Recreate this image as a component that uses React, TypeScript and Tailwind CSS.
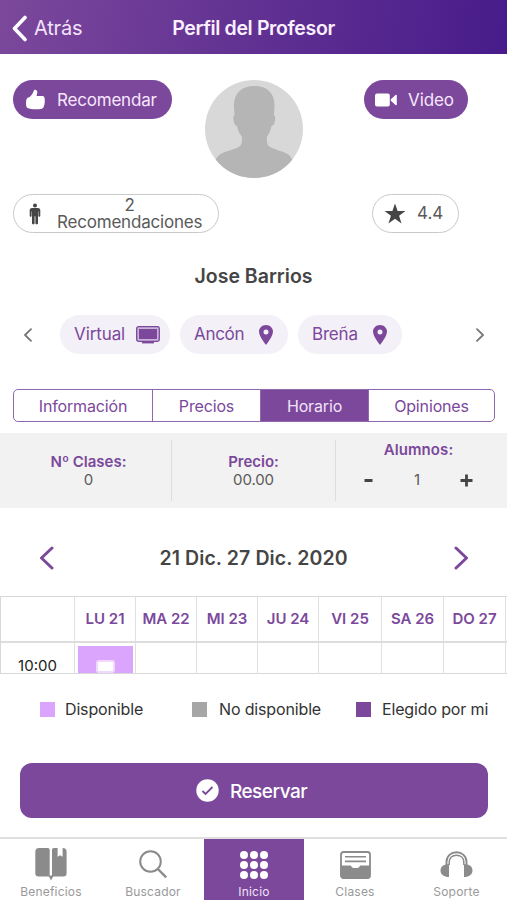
import React, { useState } from 'react'
import clsx from 'clsx'

const days = ['LU 21', 'MA 22', 'MI 23', 'JU 24', 'VI 25', 'SA 26', 'DO 27']

const tabs = ['Información', 'Precios', 'Horario', 'Opiniones']

const legend = [
    { label: 'Disponible', color: 'bg-[#dba4fd]', box: 'w-[152px] gap-[10px]' },
    { label: 'No disponible', color: 'bg-[#a6a6a6]', box: 'w-[164px] gap-[12px]' },
    { label: 'Elegido por mi', color: 'bg-[#7b489b]', box: 'gap-[11px]' },
]

type IconProps = { className?: string }

function Chevron({ className, width, d, box }: IconProps & { width: number; d: string; box: string }) {
    return (
        <svg className={className} viewBox={box} fill="none" stroke="currentColor" strokeWidth={width} strokeLinecap="round" strokeLinejoin="round">
            <path d={d} />
        </svg>
    )
}

function ThumbIcon() {
    return (
        <svg className="h-[21px] w-[19px] shrink-0" viewBox="0 0 19 21" fill="white">
            <path d="M8.300 1C9.600.2 11.300 1.200 11.300 3c0 1.500-.6 2.800-.7 4h5.800c1.500 0 2.300 1 2 2.200.5.700.6 1.700.2 2.500.4.800.4 1.900-.1 2.600.2 1 0 1.900-.6 2.500-.1 2.200-1.400 3-3.100 3.200-3.200.5-7 .5-9.800-.1-1.200-.3-2.100-.5-3-.6C.7 19.100 0 17 0 14.300 0 11.600.5 9.300 1.700 8.800c2.900-.9 4.300-3.200 5.600-5.800.3-.8.500-1.600 1-2z" />
        </svg>
    )
}

function VideoIcon() {
    return (
        <svg className="h-[14px] w-[23px] shrink-0" viewBox="0 0 23 14" fill="white">
            <rect x="0" y="0.500" width="14.800" height="13" rx="2" />
            <path d="M15.800 6.200 20.500 2c.6-.5 1.300-.3 1.300.5v9c0 .8-.7 1-1.300.5l-4.700-4.200z" />
        </svg>
    )
}

function ManIcon() {
    return (
        <svg className="h-[22px] w-[12px] shrink-0" viewBox="0 0 12 22" fill="#454545">
            <circle cx="6" cy="2.500" r="2" />
            <path d="M3 5h6c1.500 0 2.300 1 2.300 2.400v5.300c0 1.300-1.900 1.300-1.900 0V8.500H9v11.800c0 1.500-2.600 1.500-2.600 0v-7h-.8v7c0 1.500-2.600 1.500-2.600 0V8.500h-.4v4.200c0 1.300-1.900 1.300-1.900 0V7.400C.7 6 1.500 5 3 5z" />
        </svg>
    )
}

function StarIcon() {
    return (
        <svg className="h-[21px] w-[22px] shrink-0" viewBox="0 0 22 21" fill="#454545">
            <path d="m11 .5 2.600 7.600h7.800l-6.300 4.700 2.400 7.700-6.500-4.700-6.500 4.700 2.400-7.700L.6 8.100h7.800z" />
        </svg>
    )
}

function ScreenIcon() {
    return (
        <svg className="h-[18px] w-[24px] shrink-0" viewBox="0 0 24 18">
            <rect x="0.700" y="0.700" width="22.600" height="14.600" rx="1.800" fill="#c9b3d8" stroke="#7b489b" strokeWidth="1.300" />
            <rect x="3" y="3" width="18" height="10" fill="#7b489b" />
            <path d="M6 16.700h12" stroke="#7b489b" strokeWidth="1.400" />
        </svg>
    )
}

function PinIcon() {
    return (
        <svg className="h-[20px] w-[14px] shrink-0" viewBox="0 0 14 20" fill="#7b489b" fillRule="evenodd">
            <path d="M7 0c3.900 0 7 2.900 7 6.600C14 11.500 7 20 7 20S0 11.500 0 6.600C0 2.900 3.100 0 7 0zm0 4.600a2.500 2.500 0 1 0 0 5 2.500 2.500 0 0 0 0-5z" />
        </svg>
    )
}

function Avatar() {
    return (
        <svg className="ml-[33px] h-[98px] w-[98px] shrink-0" viewBox="0 0 98 98">
            <defs>
                <clipPath id="avatar">
                    <circle cx="49" cy="49" r="49" />
                </clipPath>
            </defs>
            <g clipPath="url(#avatar)">
                <rect width="98" height="98" fill="#d8d8d8" />
                <path
                    d="M49.500 6C62 6 69.500 13 69.500 25c0 4-.3 7-.7 10 1.600.5 1.600 3 1.100 5.500-.5 3-1.400 5.500-3.400 5.500-1 5-2.500 8-4.500 10.500-.4 4 0 7.500 1.500 9.500 5 3.500 12 4.500 18 7.500 4 2 6.500 6 7.500 11v14H9V84.500c1-5 3.500-9 7.500-11 6-3 14-4 18.500-7.500 2-2 2.300-5.500 1.800-9.500-2-2.500-3.800-5.500-4.800-10.500-2 0-2.900-2.500-3.400-5.500-.5-2.500-.5-5 1.100-5.500-.4-3-.7-6-.7-10C29 13 37 6 49.500 6z"
                    fill="#b5b5b5"
                />
            </g>
        </svg>
    )
}

function BookIcon() {
    return (
        <svg className="h-[33px] w-[32px]" viewBox="0 0 32 33" fill="#8b8b8b">
            <path d="M4 0h8.500C14 0 14.700.8 14.700 2v26.500H3.500C1.500 28.500.3 27.500.3 25.500V4C.3 1.500 1.600 0 4 0z" />
            <path d="M19 0h3.600v8.800l2.500-1.600 2.500 1.600V0c2.800 0 4 1.200 4 3.500v21.800c0 2.200-1 3.200-3.300 3.200H17V2c0-1.300.7-2 2-2z" />
            <path d="M13.500 27.500h5.200l-2.700 5z" />
        </svg>
    )
}

function SearchIcon() {
    return (
        <svg className="h-[29px] w-[29px]" viewBox="0 0 29 29" fill="none" stroke="#8b8b8b" strokeWidth="2">
            <circle cx="11.500" cy="11.500" r="10.300" />
            <path d="m18.800 19 8.400 8.300" strokeWidth="2.400" />
        </svg>
    )
}

function DotsIcon() {
    return (
        <svg className="h-[28px] w-[28px]" viewBox="0 0 28 28" fill="white">
            {[4, 14, 24].map((y) => [4, 14, 24].map((x) => <circle key={`${x}-${y}`} cx={x} cy={y} r="4" />))}
        </svg>
    )
}

function TrayIcon() {
    return (
        <svg className="h-[28px] w-[31px]" viewBox="0 0 31 28">
            <rect x="1" y="1" width="29" height="26" rx="2.500" fill="none" stroke="#8b8b8b" strokeWidth="1.800" />
            <path d="M5 5.800h21M5 10.400h21" stroke="#8b8b8b" strokeWidth="1.600" />
            <path d="M.5 14.500H11c.4 2 1.700 2.600 4.500 2.600s4.100-.6 4.500-2.600h10.300v10.300c0 1.600-1 2.700-2.700 2.700H3.200c-1.700 0-2.700-1.100-2.700-2.700z" fill="#8b8b8b" />
        </svg>
    )
}

function HeadphonesIcon() {
    return (
        <svg className="h-[27px] w-[33px]" viewBox="0 0 33 27">
            <path d="M6.500 14v-3C6.500 5 11 1.200 16.500 1.200s10 3.800 10 9.800v3" fill="none" stroke="#8b8b8b" strokeWidth="1.900" />
            <path d="M9.200 14v-3c0-4.300 3.200-6.800 7.300-6.800s7.300 2.500 7.300 6.800v3" fill="none" stroke="#8b8b8b" strokeWidth="1.500" />
            <path d="M9 13v13C4 26 .5 23.500.5 19.500c0-3.300 2-5.500 5.300-6zM24 13v13c5 0 8.500-2.500 8.500-6.500 0-3.300-2-5.500-5.300-6z" fill="#8b8b8b" />
        </svg>
    )
}

const navItems = [
    { label: 'Beneficios', icon: <BookIcon /> },
    { label: 'Buscador', icon: <SearchIcon /> },
    { label: 'Inicio', icon: <DotsIcon /> },
    { label: 'Clases', icon: <TrayIcon /> },
    { label: 'Soporte', icon: <HeadphonesIcon /> },
]

function Header() {
    return (
        <header className="grid h-[54px] shrink-0 grid-cols-[1fr_auto_1fr] items-center bg-linear-[100deg,#7b489b,#471b8a] px-3 text-white">
            <button className="flex items-center gap-[7px] pt-[2px]">
                <Chevron className="h-[27px] w-[15px]" box="0 0 15 27" width={3.6} d="M13 2.500 2.500 13.500 13 24.500" />
                <span className="text-[20px] tracking-[-0.2px] text-[#f3e3fa]">Atrás</span>
            </button>
            <h1 className="pt-[3px] text-[19.500px] font-semibold tracking-[-0.35px] text-[#fbf0ff]">Perfil del Profesor</h1>
        </header>
    )
}

function Profile() {
    return (
        <>
            <div className="mt-[26px] flex h-[98px] shrink-0 items-start pl-[13px]">
                <button className="flex h-[39px] w-[159px] items-center gap-3 rounded-full bg-[#7b489b] pl-[13px] text-[17px] tracking-[-0.2px] text-[#f7e6fd]">
                    <ThumbIcon />
                    <span className="pt-[2px]">Recomendar</span>
                </button>
                <Avatar />
                <button className="ml-[61px] flex h-[39px] w-[104px] items-center gap-[10px] rounded-full bg-[#7b489b] pl-[11px] text-[17px] tracking-[-0.1px] text-[#f7e6fd]">
                    <VideoIcon />
                    <span className="pt-[2px]">Video</span>
                </button>
            </div>
            <div className="mt-4 flex h-[39px] shrink-0 items-center pl-[13px] text-[17px] text-[#5a5a5a]">
                <div className="flex h-[39px] w-[206px] items-center gap-[16px] rounded-full border border-[#c9c9c9] pl-[15px]">
                    <ManIcon />
                    <span className="text-center leading-[17px] tracking-[-0.2px]">
                        2<br />Recomendaciones
                    </span>
                </div>
                <div className="ml-[153px] flex h-[39px] w-[87px] items-center gap-[11px] rounded-full border border-[#c9c9c9] pl-[11px]">
                    <StarIcon />
                    <span className="pt-px">4.4</span>
                </div>
            </div>
            <h2 className="mt-[29px] shrink-0 text-center text-[19.500px] leading-[28px] font-semibold text-[#454545]">Jose Barrios</h2>
        </>
    )
}

function Places() {
    const chip = 'flex h-[39px] items-center justify-between rounded-full bg-[#f3f0f7] pl-[14px] text-[17px] text-[#7b489b]'
    return (
        <div className="mt-[25px] flex h-[39px] shrink-0 items-center px-[23px] text-[#777777]">
            <Chevron className="h-[14px] w-[10px]" box="0 0 10 14" width={1.8} d="M8 1.200 2 7l6 5.800" />
            <div className="ml-[27px] flex gap-[10px]">
                <div className={clsx(chip, 'w-[110px] pr-[10px]')}>
                    <span className="pt-px tracking-[-0.1px]">Virtual</span> <ScreenIcon />
                </div>
                <div className={clsx(chip, 'w-[108px] pr-[15px]')}>
                    <span className="pt-px tracking-[-0.3px]">Ancón</span> <PinIcon />
                </div>
                <div className={clsx(chip, 'w-[104px] pr-[15px]')}>
                    <span className="pt-px tracking-[-0.2px]">Breña</span> <PinIcon />
                </div>
            </div>
            <Chevron className="mr-[-1px] ml-auto h-[14px] w-[10px]" box="0 0 10 14" width={1.8} d="m2 1.200 6 5.800-6 5.800" />
        </div>
    )
}

function Tabs() {
    const [active, setActive] = useState('Horario')
    return (
        <div className="mx-[13px] mt-[35px] grid h-[33px] w-[482px] shrink-0 grid-cols-[139px_108px_108px_1fr] overflow-hidden rounded-[5px] border-[1.500px] border-[#9068ad]">
            {tabs.map((tab) => (
                <button
                    key={tab}
                    onClick={() => setActive(tab)}
                    className={clsx(
                        'border-r border-[#9068ad] text-[16px] tracking-[-0.150px] last:border-r-0',
                        tab === active ? 'bg-[#7b489b] text-[#f3e3fa]' : 'text-[#7b489b]',
                    )}
                >
                    {tab}
                </button>
            ))}
        </div>
    )
}

function Summary() {
    const [students, setStudents] = useState(1)
    return (
        <section className="mt-[11px] grid h-[75px] shrink-0 grid-cols-[172px_164px_1fr] bg-[#f2f2f2] py-[7px] text-center text-[15px] text-[#5a5a5a]">
            <div className="border-r border-[#dedede] pt-[12px] pl-[6px]">
                <p className="pt-px leading-[18px] font-semibold text-[#7b489b]">Nº Clases:</p>
                <p className="leading-[18px]">0</p>
            </div>
            <div className="border-r border-[#dedede] pt-[12px]">
                <p className="pt-px leading-[18px] font-semibold text-[#7b489b]">Precio:</p>
                <p className="leading-[18px] tracking-[-0.1px]">00.00</p>
            </div>
            <div className="pr-[6px]">
                <p className="pt-px leading-[18px] font-semibold tracking-[0.1px] text-[#7b489b]">Alumnos:</p>
                <div className="mt-[11px] flex items-center justify-between pr-[28px] pl-[28px] leading-[20px]">
                    <button className="flex h-5 w-[10px] items-center" onClick={() => setStudents(Math.max(1, students - 1))}>
                        <svg className="h-[13px] w-[9px]" viewBox="0 0 9 13" stroke="#454545" strokeWidth="3"><path d="M.5 6.500h8" /></svg>
                    </button>
                    <span>{students}</span>
                    <button className="flex h-5 w-[13px] items-center" onClick={() => setStudents(students + 1)}>
                        <svg className="h-[13px] w-[13px]" viewBox="0 0 13 13" stroke="#454545" strokeWidth="2.800"><path d="M.5 6.500h12M6.500.5v12" /></svg>
                    </button>
                </div>
            </div>
        </section>
    )
}

function Schedule() {
    const columns = 'grid grid-cols-[74px_61px_61px_61px_61px_63px_62px_62px]'
    return (
        <>
            <div className="mt-[36px] flex h-[28px] shrink-0 items-center justify-between px-[39px] text-[#7b489b]">
                <Chevron className="h-[24px] w-[15px]" box="0 0 15 24" width={3} d="M13 2 2.500 12 13 22" />
                <span className="pt-[2px] text-[19.500px] font-semibold tracking-[0.1px] text-[#454545]">21 Dic. 27 Dic. 2020</span>
                <Chevron className="h-[24px] w-[15px]" box="0 0 15 24" width={3} d="m3 2 10.500 10L3 22" />
            </div>
            <div className="mt-[24px] h-[78px] w-[507px] shrink-0 overflow-hidden border border-r-0 border-[#d8d8d8]">
                <div className={clsx(columns, 'h-[46px] border-b-2 border-[#dddddd] text-[15px] font-semibold text-[#7b489b]')}>
                    <div className="border-r border-[#e0e0e0]" />
                    {days.map((day) => (
                        <div key={day} className="flex items-center justify-center border-r border-[#e0e0e0] pt-px whitespace-nowrap">
                            {day}
                        </div>
                    ))}
                </div>
                <div className={clsx(columns, 'h-[60px]')}>
                    <div className="border-r border-[#e0e0e0] pt-[13px] text-center text-[15px] leading-[20px] text-[#222222]">10:00</div>
                    {days.map((day, index) => (
                        <div key={day} className="border-r border-[#e0e0e0] pr-[2px] pl-[3px] pt-[3px]">
                            {index === 0 && (
                                <div className="flex h-[50px] justify-center bg-[#dba4fd] pt-[14px]">
                                    <div className="h-[13px] w-[19px] rounded-[3px] border-2 border-[#f0d9fc] bg-white" />
                                </div>
                            )}
                        </div>
                    ))}
                </div>
            </div>
            <div className="mt-[25px] flex h-[20px] shrink-0 pl-[40px] text-[16px] tracking-[-0.150px] text-[#333333]">
                {legend.map((item) => (
                    <div key={item.label} className={clsx('flex items-center whitespace-nowrap', item.box)}>
                        <span className={clsx('h-[15px] w-[15px]', item.color)} />
                        <span>{item.label}</span>
                    </div>
                ))}
            </div>
        </>
    )
}

function BottomNav() {
    return (
        <nav className="mt-[19px] grid h-[63px] shrink-0 grid-cols-[102px_102px_100px_102px_101px] border-t-2 border-[#dfdfdf]">
            {navItems.map((item) => (
                <a
                    key={item.label}
                    className={clsx(
                        'flex flex-col items-center text-[12px] tracking-[0.2px]',
                        item.label === 'Inicio' ? 'bg-[#7b489b] text-[#f3e3fa]' : 'text-[#999999]',
                    )}
                >
                    <span className="flex h-[44px] items-center justify-center pt-[7px]">{item.icon}</span>
                    <span className="leading-[17px]">{item.label}</span>
                </a>
            ))}
        </nav>
    )
}

export default function App() {
    return (
        <div className="flex h-[900px] w-[507px] flex-col overflow-hidden bg-white font-['Inter',sans-serif]">
            <Header />
            <Profile />
            <Places />
            <Tabs />
            <Summary />
            <Schedule />
            <button className="mt-[44px] ml-[20px] flex h-[55px] w-[468px] shrink-0 items-center justify-center gap-[11px] rounded-xl bg-[#7b489b] pr-[5px] text-[19px] font-medium tracking-[-0.5px] text-white">
                <svg className="h-[23px] w-[23px]" viewBox="0 0 23 23">
                    <circle cx="11.500" cy="11.500" r="11.200" fill="white" />
                    <path d="m6.500 12 3 3 7-7" fill="none" stroke="#7b489b" strokeWidth="1.800" />
                </svg>
                <span className="pt-[4px]">Reservar</span>
            </button>
            <BottomNav />
        </div>
    )
}
